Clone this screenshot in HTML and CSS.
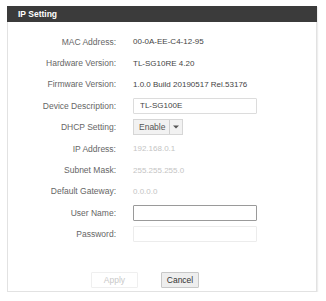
FILE: index.html
```html
<!DOCTYPE html>
<html lang="en">
  <head>
    <meta charset="UTF-8" />
    <title>IP Setting</title>
    <link rel="stylesheet" href="styles.css">
  </head>
  <body>
    <div class="panel">
      <div class="panel-title">IP Setting</div>
      <form class="form">
        <label>MAC Address:</label>
        <span class="value">00-0A-EE-C4-12-95</span>

        <label>Hardware Version:</label>
        <span class="value">TL-SG10RE 4.20</span>

        <label>Firmware Version:</label>
        <span class="value">1.0.0 Build 20190517 Rel.53176</span>

        <label for="desc">Device Description:</label>
        <div class="field"><input id="desc" class="box" type="text" value="TL-SG100E" /></div>

        <label>DHCP Setting:</label>
        <div class="field">
          <div class="select">
            <span class="select-text">Enable</span>
            <span class="select-arrow">
              <svg width="6" height="4" viewBox="0 0 6 4"><path d="M0 0.5h6L3 3.5z" fill="#555"/></svg>
            </span>
          </div>
        </div>

        <label>IP Address:</label>
        <span class="value disabled">192.168.0.1</span>

        <label>Subnet Mask:</label>
        <span class="value disabled">255.255.255.0</span>

        <label>Default Gateway:</label>
        <span class="value disabled">0.0.0.0</span>

        <label for="user">User Name:</label>
        <div class="field"><input id="user" class="box dark" type="text" /></div>

        <label for="pass">Password:</label>
        <div class="field"><input id="pass" class="box light" type="password" /></div>
      </form>

      <div class="buttons">
        <button class="btn apply" disabled>Apply</button>
        <button class="btn cancel">Cancel</button>
      </div>
    </div>
  </body>
</html>
```

FILE: styles.css
```css
* {
  margin: 0;
  padding: 0;
  box-sizing: border-box;
}

body {
  font-family: "Liberation Sans", Arial, sans-serif;
  background-color: #ffffff;
  padding: 6px 9px 0 7px;
}

.panel {
  width: 310px;
  height: 286px;
  border: 1px solid #e2e2e2;
  border-top: none;
  box-shadow: 1px 1px 1px #eeeeee;
}

.panel-title {
  height: 16px;
  background-color: #3b3b3b;
  color: #ffffff;
  font-size: 8.5px;
  font-weight: bold;
  line-height: 16px;
  padding-left: 11px;
  margin: 0 -1px;
}

.form {
  display: grid;
  grid-template-columns: 108px 1fr;
  grid-auto-rows: 21.4px;
  column-gap: 17px;
  align-items: center;
  padding-top: 9px;
  font-size: 8.5px;
}

label {
  text-align: right;
  color: #666;
}

.value {
  color: #444;
  font-size: 8px;
}

.value.disabled {
  color: #c4c4c4;
}

.field {
  display: flex;
  align-items: center;
}

.box {
  width: 124px;
  height: 16px;
  border: 1px solid #dcdcdc;
  border-radius: 1px;
  padding: 0 6px;
  font-family: inherit;
  font-size: 8px;
  color: #444;
  outline: none;
}

.box.dark {
  border-color: #9a9a9a;
}

.box.light {
  border-color: #ececec;
}

.select {
  display: flex;
  width: 50px;
  height: 16px;
  border: 1px solid #d6d6d6;
  background-color: #f2f2f2;
  color: #555;
}

.select-text {
  flex: 1;
  line-height: 14px;
  padding-left: 5px;
}

.select-arrow {
  width: 13px;
  border-left: 1px solid #d0d0d0;
  display: flex;
  align-items: center;
  justify-content: center;
}

.buttons {
  display: flex;
  gap: 23px;
  padding-left: 83px;
  margin-top: 27px;
}

.btn {
  height: 16px;
  font-family: inherit;
  font-size: 8.5px;
  border-radius: 1px;
}

.apply {
  width: 47px;
  color: #c8c8c8;
  background-color: #ffffff;
  border: 1px solid #efefef;
}

.cancel {
  width: 38px;
  color: #333;
  background-color: #eeeeee;
  border: 1px solid #c8c8c8;
}
```
